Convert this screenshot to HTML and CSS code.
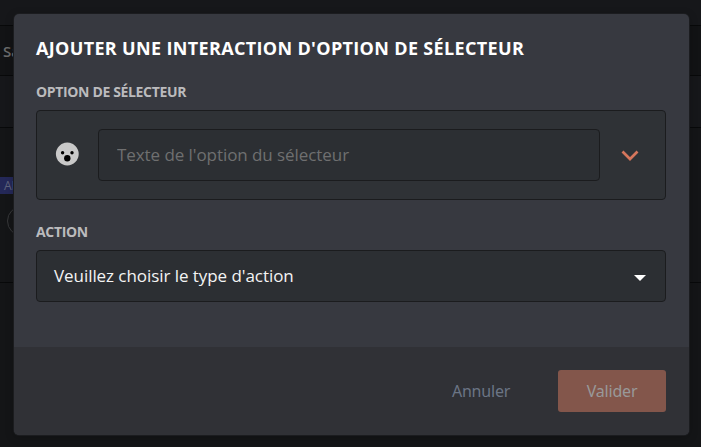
FILE: index.html
```html
<!DOCTYPE html>
<html lang="fr">
<head>
<meta charset="utf-8">
<title>Ajouter une interaction</title>
<link rel="stylesheet" href="styles.css">
</head>
<body>
<div class="page">
  <div class="row row-top"></div>
  <div class="row row-save">Sa</div>
  <div class="row row-gap"></div>
  <div class="row row-content"><span class="tag">AI</span><span class="circle"></span></div>
  <div class="row row-rest"></div>
</div>
<div class="overlay">
  <section class="modal" role="dialog">
    <div class="body">
      <h1 class="title">AJOUTER UNE INTERACTION D'OPTION DE SÉLECTEUR</h1>
      <h2 class="label">OPTION DE SÉLECTEUR</h2>
      <div class="option">
        <svg class="emoji" viewBox="0 0 24 24"><circle cx="12.3" cy="12" r="11.4" fill="#c9c9c9"/><circle cx="7.6" cy="10.8" r="1.7"/><circle cx="17" cy="10.8" r="1.7"/><circle cx="12.3" cy="16.2" r="3.2"/></svg>
        <input class="text" type="text" placeholder="Texte de l'option du sélecteur">
        <svg class="chevron" viewBox="0 0 18 12"><path d="M1.5 1.5 L9 9 L16.5 1.5" fill="none" stroke="#d6765c" stroke-width="2.7"/></svg>
      </div>
      <h2 class="label label-action">ACTION</h2>
      <div class="select"><span class="select-text">Veuillez choisir le type d'action</span><svg class="caret" viewBox="0 0 12 6"><path d="M0 0H12L6 6Z" fill="#fff"/></svg></div>
    </div>
    <footer class="footer">
      <button class="cancel">Annuler</button>
      <button class="submit">Valider</button>
    </footer>
  </section>
</div>
</body>
</html>
```
FILE: styles.css
```css
* { box-sizing: border-box; }
body {
  margin: 0;
  height: 447px;
  overflow: hidden;
  background: #16171a;
  font-family: "Open Sans", "Noto Sans", sans-serif;
}
.page { display: flex; flex-direction: column; height: 447px; }
.row { border-bottom: 1px solid #08090a; }
.row-top { height: 26px; }
.row-save {
  height: 50px;
  padding-left: 3px;
  background: #121315;
  color: #6b6b6b;
  font-size: 15px;
  font-weight: 600;
  line-height: 51px;
}
.row-gap { height: 52px; }
.row-content { height: 155px; padding-top: 49px; background: #141517; }
.row-rest { flex: 1; border: 0; background: #141517; }
.tag {
  display: block;
  width: 22px;
  height: 17px;
  padding-left: 4px;
  background: #242858;
  color: #60647d;
  font-size: 12px;
  line-height: 17px;
}
.circle {
  display: block;
  width: 30px;
  height: 30px;
  margin: 12px 0 0 7px;
  border: 1px solid #37383a;
  border-radius: 50%;
}
.overlay { position: absolute; inset: 0; padding: 14px 12px 12px 14px; }
.modal {
  display: flex;
  flex-direction: column;
  width: 675px;
  height: 421px;
  overflow: hidden;
  border-radius: 5px;
  background: #373940;
  box-shadow: 0 0 0 1px #1b1c1f, 0 2px 10px rgba(0, 0, 0, .24);
}
.body { height: 333px; padding: 22px 23px 0 22px; }
.title {
  margin: 0;
  color: #fff;
  font-size: 18px;
  font-weight: 700;
  line-height: 24px;
  letter-spacing: .34px;
  white-space: nowrap;
}
.label {
  margin: 22px 0 8px;
  color: #bbbbbd;
  font-size: 14px;
  font-weight: 750;
  line-height: 20px;
  letter-spacing: -.35px;
}
.option {
  display: flex;
  align-items: center;
  height: 90px;
  padding: 0 27px 0 18px;
  border: 1px solid #1b1c1e;
  border-radius: 4px;
  background: #2f3236;
}
.emoji { flex: none; width: 24px; height: 24px; margin: -2px 19px 0 0; }
.text {
  flex: none;
  width: 502px;
  height: 52px;
  padding: 0 18px 2px;
  border: 1px solid #1b1c1e;
  border-radius: 4px;
  outline: 0;
  background: #2c2f33;
  color: #fff;
  font: 17px "Open Sans", sans-serif;
  letter-spacing: -.07px;
}
.text::placeholder { color: #6f6f70; }
.chevron { flex: none; width: 18px; height: 12px; margin: 2px 0 0 21px; }
.label-action { margin-top: 22px; }
.select {
  display: flex;
  align-items: center;
  justify-content: space-between;
  height: 52px;
  padding: 0 19px 0 17px;
  border: 1px solid #1b1c1e;
  border-radius: 4px;
  background: #2c2f33;
  color: #f4f4f4;
  font-size: 17px;
  font-weight: 500;
  letter-spacing: -.06px;
}
.select-text { padding-bottom: 2px; }
.caret { width: 12px; height: 6px; margin-top: 4px; }
.footer {
  display: flex;
  align-items: center;
  justify-content: flex-end;
  height: 88px;
  padding-right: 23px;
  background: #303136;
}
.cancel, .submit {
  height: 42px;
  padding: 0;
  border: 0;
  font: 16px "Noto Sans", sans-serif;
  letter-spacing: -.2px;
}
.cancel { width: 106px; margin-right: 24px; background: none; color: #6b7585; }
.submit { width: 108px; border-radius: 3px; background: #83564b; color: #999; }
```
